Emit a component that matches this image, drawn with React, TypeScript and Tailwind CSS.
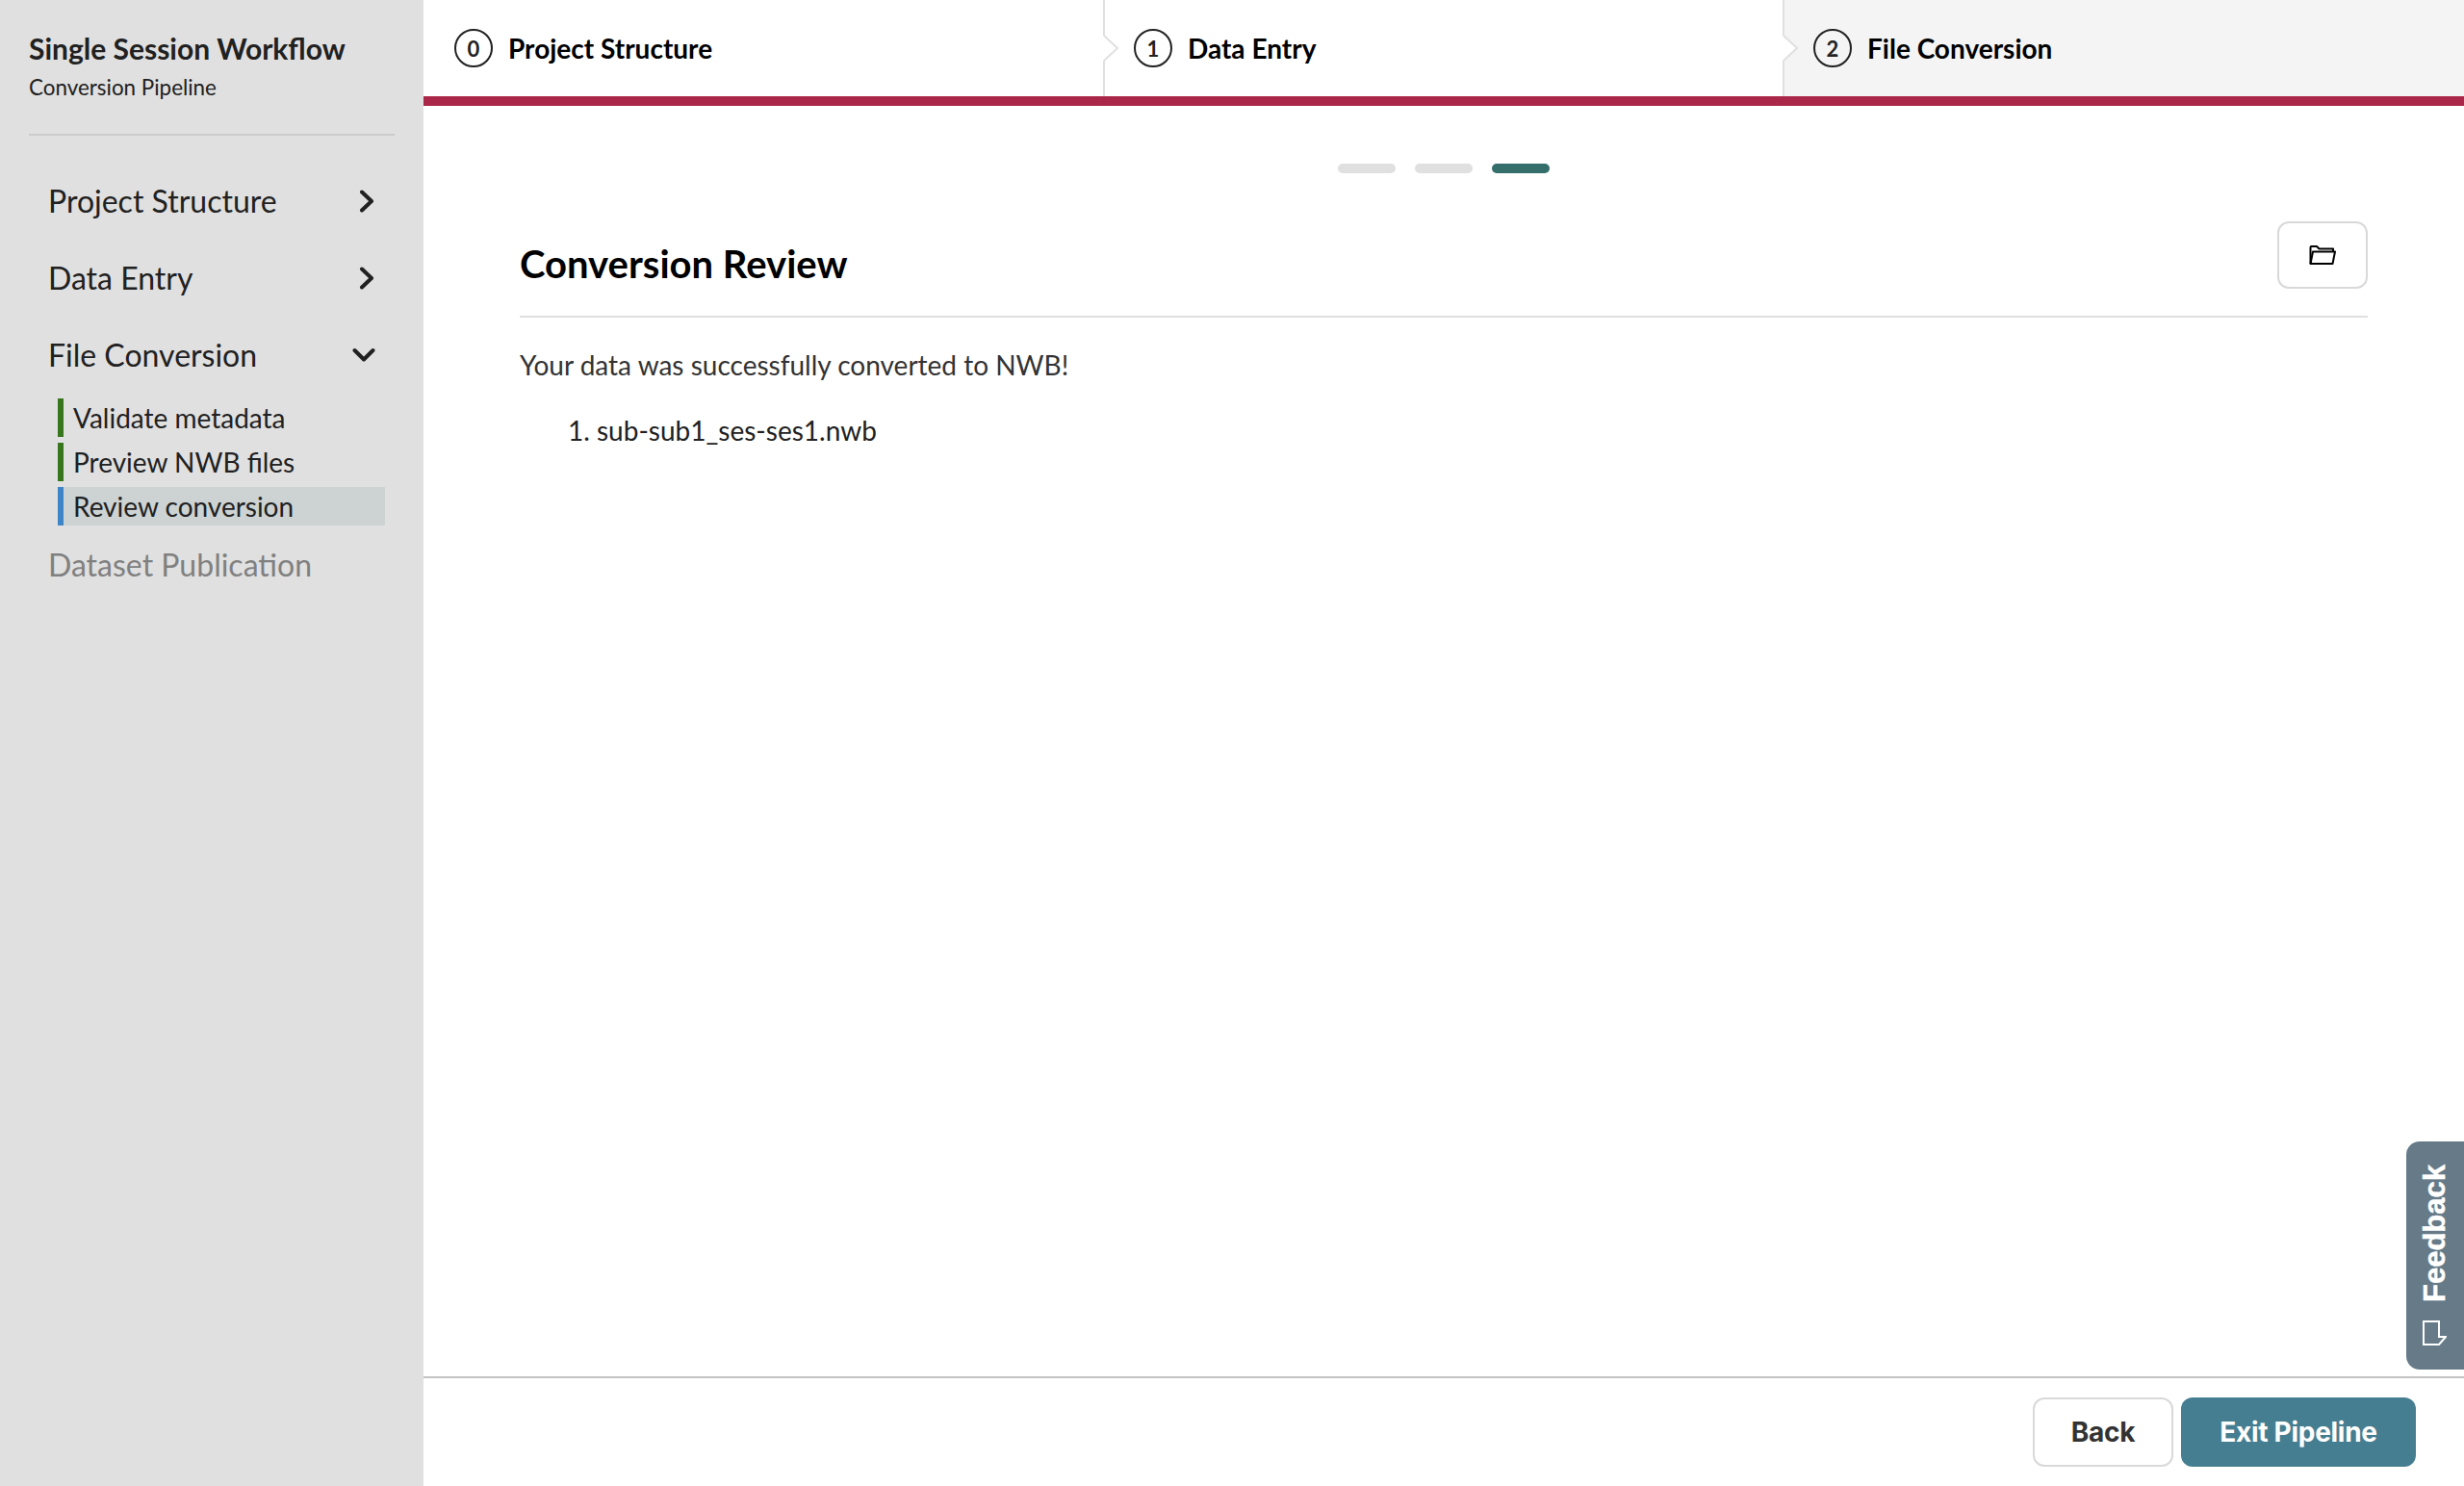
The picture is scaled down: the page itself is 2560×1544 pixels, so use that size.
import React from "react";

const lato = "[font-family:Lato,sans-serif]";

function StepChevron() {
  return (
    <svg className="absolute left-[-2px] top-[36px]" width="17" height="28" viewBox="0 0 17 28" fill="none">
      <path d="M0 1 H1 L15 14 L1 27 H0 Z" fill="#ffffff" />
      <path d="M1 1 L15 14 L1 27" stroke="#e0e0e0" strokeWidth="2" />
    </svg>
  );
}

function Step({ n, label, className }: { n: number; label: string; className: string }) {
  return (
    <div className={`relative flex items-center h-full ${className}`}>
      {n > 0 && <StepChevron />}
      <span className="w-[40px] h-[40px] rounded-full border-2 border-[#222222] flex items-center justify-center text-[22px] font-bold text-[#222222] shrink-0">
        {n}
      </span>
      <span className="text-[28px] font-bold text-black">{label}</span>
    </div>
  );
}

function NavHeader({ label, open, muted }: { label: string; open?: boolean; muted?: boolean }) {
  return (
    <div className={`flex items-center justify-between h-[80px] pl-[20px] pr-[20px] text-[32px] ${muted ? "text-[#808080]" : "text-[#212121]"}`}>
      <span>{label}</span>
      {!muted &&
        (open ? (
          <svg width="24" height="16" viewBox="0 0 24 16" fill="none">
            <path d="M2.5 3 L12 12.5 L21.5 3" stroke="#212121" strokeWidth="4" strokeLinecap="round" strokeLinejoin="round" />
          </svg>
        ) : (
          <svg className="mr-[1px]" width="16" height="24" viewBox="0 0 16 24" fill="none">
            <path d="M3 2.5 L13 12 L3 21.5" stroke="#212121" strokeWidth="4" strokeLinecap="round" strokeLinejoin="round" />
          </svg>
        ))}
    </div>
  );
}

function SubItem({ label, color, active }: { label: string; color: string; active?: boolean }) {
  return (
    <div className={`h-[40px] flex items-center pl-[10px] border-l-[6px] text-[28px] text-[#212121] ${color} ${active ? "bg-[#cdd3d3]" : ""}`}>
      {label}
    </div>
  );
}

export default function App() {
  return (
    <div className={`flex w-screen h-screen overflow-hidden bg-white ${lato}`}>
      <aside className="w-[440px] shrink-0 bg-[#e0e0e0] flex flex-col">
        <div className="mx-[30px] pt-[30px] h-[141px] border-b-2 border-[#cccccc]">
          <div className="text-[30px] leading-[40px] font-bold text-[#212121]">Single Session Workflow</div>
          <div className="mt-[1px] text-[22.4px] leading-[40px] text-[#212121]">Conversion Pipeline</div>
        </div>
        <nav className="mt-[28px] mx-[30px] flex flex-col">
          <NavHeader label="Project Structure" />
          <NavHeader label="Data Entry" />
          <NavHeader label="File Conversion" open />
          <div className="ml-[30px] mr-[10px] mt-[5px] flex flex-col gap-[6px]">
            <SubItem label="Validate metadata" color="border-[#38761d]" />
            <SubItem label="Preview NWB files" color="border-[#38761d]" />
            <SubItem label="Review conversion" color="border-[#3d85c6]" active />
          </div>
          <div className="mt-[1px]">
            <NavHeader label="Dataset Publication" muted />
          </div>
        </nav>
      </aside>

      <main className="flex-1 min-w-0 flex flex-col">
        <header className="h-[110px] shrink-0 flex border-b-[10px] border-[#aa274a]">
          <Step n={0} label="Project Structure" className="w-[706px] pl-[32px] gap-[16px] bg-white" />
          <Step n={1} label="Data Entry" className="w-[706px] pl-[30px] gap-[16px] bg-white border-l-2 border-[#e0e0e0]" />
          <Step n={2} label="File Conversion" className="flex-1 pl-[30px] gap-[16px] bg-[#f4f4f4] border-l-2 border-[#e0e0e0]" />
        </header>

        <section className="flex-1 min-h-0 flex flex-col pt-[60px] px-[100px]">
          <div className="flex justify-center gap-[20px]">
            <span className="w-[60px] h-[10px] rounded-full bg-[#e0e0e0]" />
            <span className="w-[60px] h-[10px] rounded-full bg-[#e0e0e0]" />
            <span className="w-[60px] h-[10px] rounded-full bg-[#356f6c]" />
          </div>
          <div className="mt-[50px] flex items-end justify-between border-b-2 border-[#e0e0e0] pb-[28px]">
            <h1 className="text-[40px] leading-[50px] font-bold text-black mb-[1px]">Conversion Review</h1>
            <button className="w-[94px] h-[70px] rounded-[12px] border-2 border-[#d9d9d9] bg-white flex items-center justify-center">
              <svg width="28" height="20" viewBox="0 0 28 20" fill="none" stroke="#000000" strokeWidth="2" strokeLinejoin="round">
                <path d="M1.5 19 V2 Q1.5 1 2.5 1 H8 L10.5 3.5 H25 V6.5" />
                <path d="M1.5 19 L4 6.5 H27 L24.5 19 Z" />
              </svg>
            </button>
          </div>
          <p className="mt-[29px] text-[28px] leading-[40px] text-[#333333]">Your data was successfully converted to NWB!</p>
          <ol className="mt-[28px] pl-[80px] list-decimal text-[28px] leading-[40px] text-[#212121]">
            <li>sub-sub1_ses-ses1.nwb</li>
          </ol>
        </section>

        <footer className="h-[114px] shrink-0 border-t-2 border-[#c4c4c4] flex items-start justify-end gap-[8px] pt-[20px] pr-[50px] [font-family:Inter,sans-serif] text-[28px] font-bold tracking-[-0.01em]">
          <button className="w-[146px] h-[72px] rounded-[12px] border-2 border-[#d9d9d9] bg-white text-[#333333]">Back</button>
          <button className="w-[244px] h-[72px] rounded-[12px] bg-[#467e91] text-white">Exit Pipeline</button>
        </footer>
      </main>

      <div className="absolute right-0 top-[1186px] w-[60px] h-[237px] rounded-l-[14px] bg-[#667a88] flex flex-col items-center justify-end pb-[24px] pr-[2px] gap-[18px] text-white">
        <span className="[writing-mode:vertical-rl] rotate-180 text-[31px] leading-none font-bold [font-family:'Liberation_Sans',sans-serif] [-webkit-text-stroke:0.5px_white]">Feedback</span>
        <svg width="26" height="28" viewBox="0 0 26 28" fill="none">
          <path d="M2 2 H18 V18 H25 L18 26 H2 Z" stroke="#ffffff" strokeWidth="2" />
        </svg>
      </div>
    </div>
  );
}
